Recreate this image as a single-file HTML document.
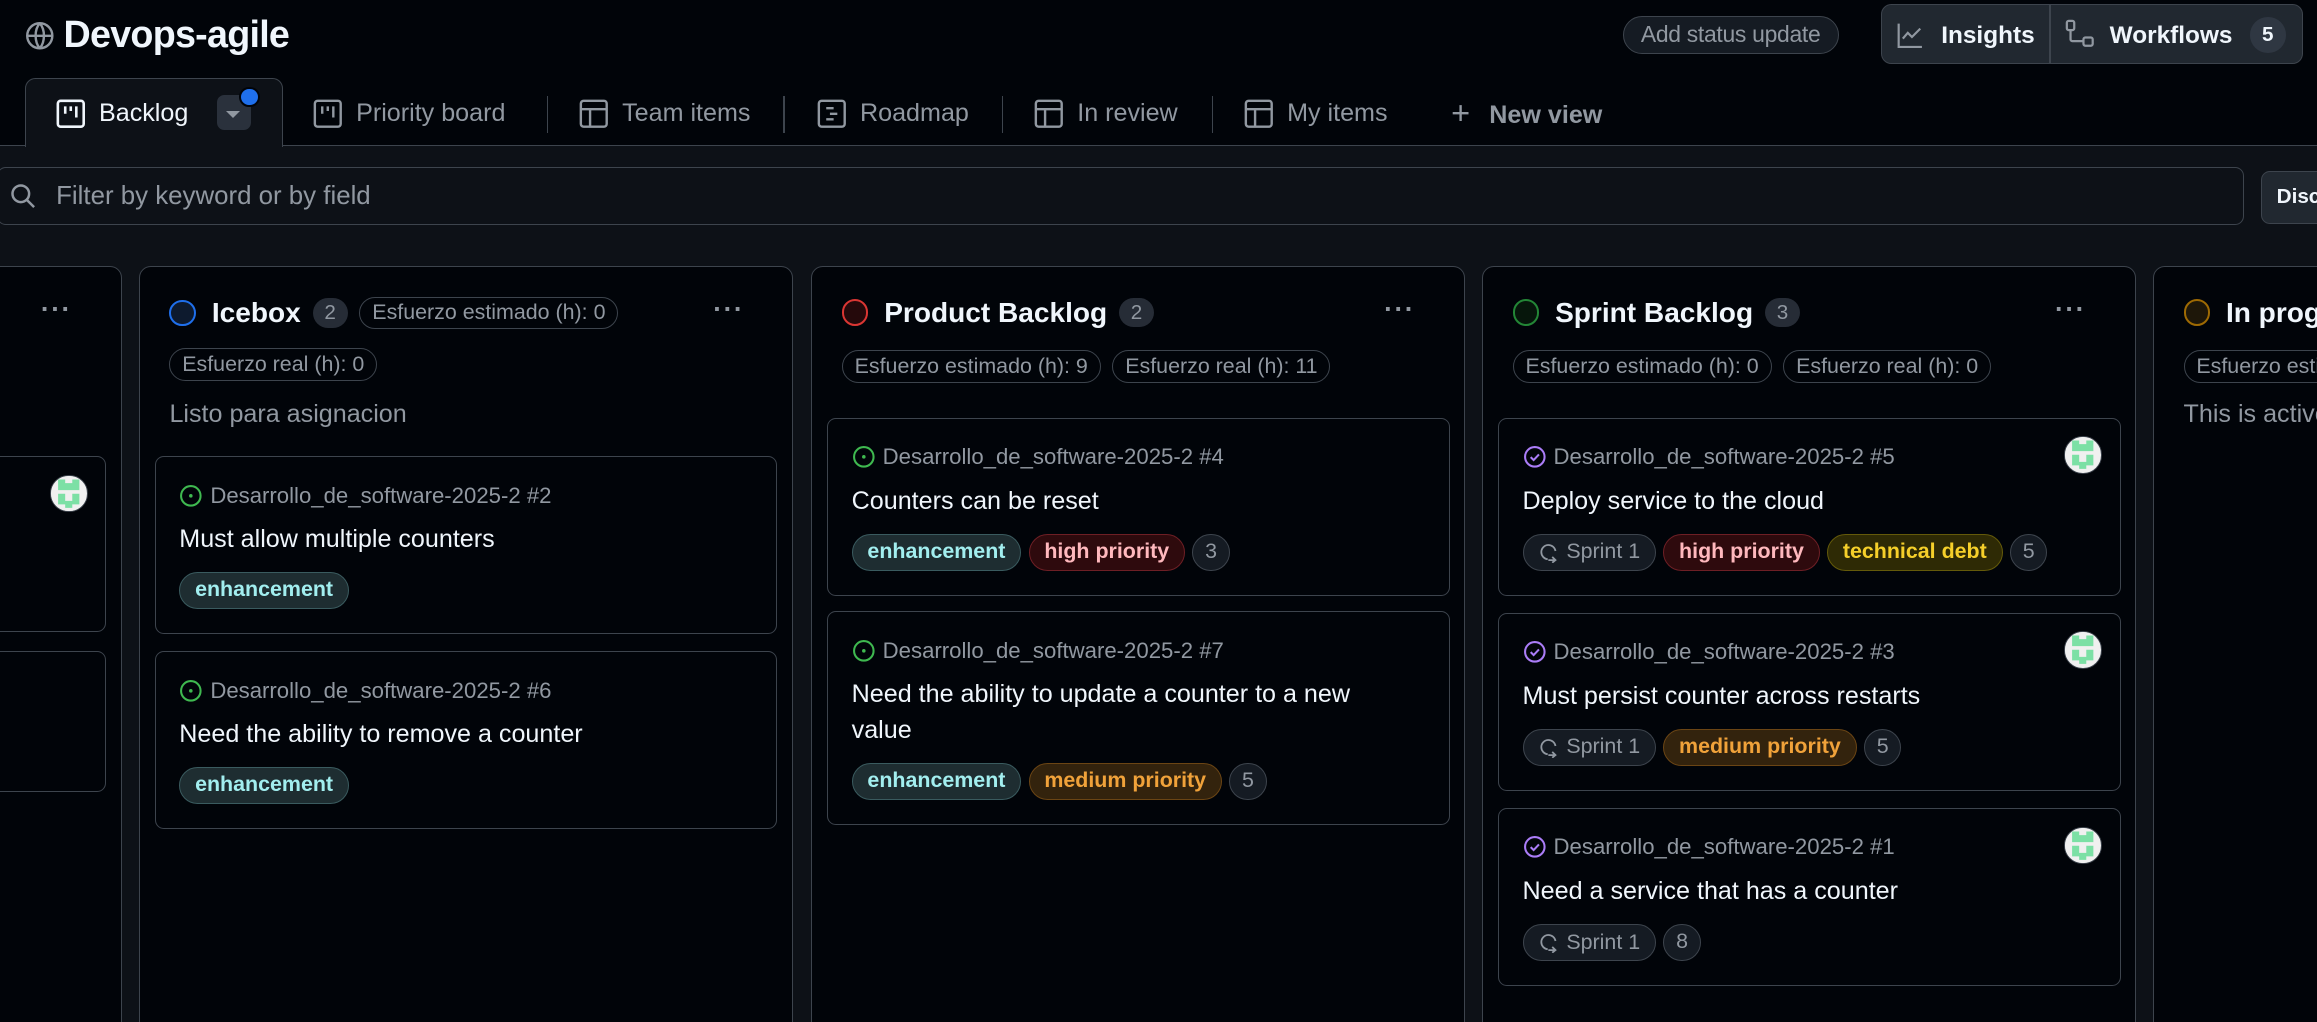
<!DOCTYPE html>
<html><head><meta charset="utf-8">
<style>
html,body{margin:0;padding:0;background:#010409;width:2317px;height:1022px;overflow:hidden}
#z{zoom:1.4777;position:relative;width:1568px;height:692px;overflow:hidden;font-family:"Liberation Sans",sans-serif;color:#f0f6fc;background:#010409}
.a{position:absolute}
.low{position:absolute;left:0;top:98px;width:1568px;height:600px;background:#0d1117;border-top:1px solid #3d444d}
.tab{position:absolute;top:67px;font-size:17px;color:#9198a1;display:flex;align-items:center;gap:9px;white-space:nowrap}
.sep{position:absolute;top:65px;width:1px;height:25px;background:#3d444d}
.col{position:absolute;top:180px;width:441px;height:540px;background:#010409;border:1px solid #3d444d;border-radius:8px}
.hd{position:absolute;top:20px;left:20px;display:flex;align-items:center;gap:8px;white-space:nowrap}
.ring{width:15px;height:15px;border-radius:50%;border:2px solid;margin-right:3px}
.ttl{font-size:19px;font-weight:bold}
.cnt{background:#262c36;color:#9198a1;font-size:14px;border-radius:11px;padding:2px 8px}
.pill{display:inline-block;font-size:14.5px;color:#9198a1;border:1px solid #3d444d;border-radius:12px;padding:2px 8px;white-space:nowrap}
.dots{position:absolute;top:18px;font-size:18px;color:#9198a1;letter-spacing:1px;font-weight:bold}
.desc{position:absolute;left:20px;font-size:17px;color:#9198a1;white-space:nowrap}
.card{position:absolute;left:10px;width:388px;padding:16px;background:#010409;border:1px solid #3d444d;border-radius:6px}
.repo{font-size:15px;color:#9198a1;display:flex;align-items:center;gap:5px;height:20px;white-space:nowrap}
.ct{font-size:17px;line-height:24px;margin-top:8px}
.lb{margin-top:10px;display:flex;gap:5px;height:25px}
.l{font-size:14.5px;font-weight:bold;border:1px solid;border-radius:13px;padding:0 10px;line-height:23px;white-space:nowrap}
.en{background:#1e2d31;border-color:#3a5b5f;color:#a2eeef}
.hp{background:#2e0a0d;border-color:#6e1f25;color:#ffb8bd}
.mp{background:#33230d;border-color:#6b4514;color:#f0a23a}
.td{background:#2e2a05;border-color:#645a0a;color:#f5cf2a}
.nm{background:#151b23;border-color:#3d444d;color:#9198a1;font-weight:normal;padding:0 8px}
.sp{background:#151b23;border-color:#3d444d;color:#9198a1;font-weight:normal;display:flex;align-items:center;gap:5px}
.av{position:absolute;right:12px;top:12px;width:24px;height:24px;border-radius:50%;background:#f0f0f0;border:1px solid #3d444d;overflow:hidden}
</style></head><body><div id="z">
<svg class="a" style="left:17px;top:14px" width="20" height="20" viewBox="0 0 16 16" fill="none" stroke="#9198a1" stroke-width="1.3"><circle cx="8" cy="8" r="6.8"/><path d="M1.2 8h13.6M8 1.2c-3 3.5-3 10 0 13.6M8 1.2c3 3.5 3 10 0 13.6"/></svg>
<div class="a" style="left:43px;top:9px;font-size:25.5px;font-weight:bold;letter-spacing:-0.5px">Devops-agile</div>
<div class="a" style="left:1098px;top:11px;width:145px;height:24px;border:1px solid #3d444d;border-radius:13px;background:#151b23;color:#9198a1;font-size:15.5px;line-height:24px;text-align:center;letter-spacing:-0.2px">Add status update</div>
<div class="a" style="left:1273px;top:3px;width:284px;height:39px;border:1px solid #3d444d;border-radius:7px;background:#212830;font-size:16.5px;font-weight:bold">
 <svg class="a" style="left:10px;top:11px" width="18" height="18" viewBox="0 0 16 16" fill="none" stroke="#9198a1" stroke-width="1.3"><path d="M1 1v14h14M3.5 10l3-3.5 2.5 2.5L14 4"/></svg>
 <div class="a" style="left:40px;top:11px">Insights</div>
 <div class="a" style="left:113px;top:0;width:1px;height:39px;background:#3d444d"></div>
 <svg class="a" style="left:124px;top:9px" width="20" height="20" viewBox="0 0 16 16" fill="none" stroke="#9198a1" stroke-width="1.2"><rect x="1" y="1" width="4" height="5" rx="1"/><rect x="10" y="10" width="5" height="4.5" rx="1"/><path d="M3 6v5a1 1 0 0 0 1 1h6"/></svg>
 <div class="a" style="left:154px;top:11px">Workflows</div>
 <div class="a" style="left:249px;top:8px;width:24px;height:24px;border-radius:12px;background:#2f3742;font-size:14px;text-align:center;line-height:24px">5</div>
</div>
<div class="low"></div>
<div class="a" style="left:17px;top:53px;width:173px;height:46px;background:#0d1117;border:1px solid #3d444d;border-bottom:none;border-radius:7px 7px 0 0"></div>
<div class="tab" style="left:38px;color:#f0f6fc">
 <svg width="20" height="20" viewBox="0 0 16 16" fill="none" stroke="#f0f6fc" stroke-width="1.4"><rect x="1" y="1" width="14" height="14" rx="1.5"/><path d="M5 4v4M8 4v2.5M11 4v6"/></svg><span>Backlog</span></div>
<div class="a" style="left:147px;top:64px;width:23px;height:24px;border-radius:5px;background:#2a313c"></div>
<div class="a" style="left:153px;top:75px;width:0;height:0;border-left:5px solid transparent;border-right:5px solid transparent;border-top:5px solid #9198a1"></div>
<div class="a" style="left:162px;top:59px;width:11px;height:11px;border-radius:50%;background:#1f6feb;border:2px solid #010409"></div>
<div class="tab" style="left:212px"><svg width="20" height="20" viewBox="0 0 16 16" fill="none" stroke="#9198a1" stroke-width="1.3"><rect x="1" y="1" width="14" height="14" rx="1.5"/><path d="M5 4v4M8 4v2.5M11 4v6"/></svg><span>Priority board</span></div>
<div class="sep" style="left:370px"></div>
<div class="tab" style="left:392px"><svg width="20" height="20" viewBox="0 0 16 16" fill="none" stroke="#9198a1" stroke-width="1.3"><rect x="1" y="1" width="14" height="14" rx="1.5"/><path d="M1 5.5h14M6 5.5V15"/></svg><span>Team items</span></div>
<div class="sep" style="left:530px"></div>
<div class="tab" style="left:553px"><svg width="20" height="20" viewBox="0 0 16 16" fill="none" stroke="#9198a1" stroke-width="1.3"><rect x="1" y="1" width="14" height="14" rx="1.5"/><path d="M5 5h4M7 8h4M5 11h4"/></svg><span>Roadmap</span></div>
<div class="sep" style="left:678px"></div>
<div class="tab" style="left:700px"><svg width="20" height="20" viewBox="0 0 16 16" fill="none" stroke="#9198a1" stroke-width="1.3"><rect x="1" y="1" width="14" height="14" rx="1.5"/><path d="M1 5.5h14M6 5.5V15"/></svg><span>In review</span></div>
<div class="sep" style="left:820px"></div>
<div class="tab" style="left:842px"><svg width="20" height="20" viewBox="0 0 16 16" fill="none" stroke="#9198a1" stroke-width="1.3"><rect x="1" y="1" width="14" height="14" rx="1.5"/><path d="M1 5.5h14M6 5.5V15"/></svg><span>My items</span></div>
<div class="tab" style="left:982px;font-weight:bold"><span style="font-size:22px;font-weight:normal;margin-top:-3px">+</span><span style="margin-left:4px">New view</span></div>
<div class="a" style="left:-2px;top:113px;width:1519px;height:38px;border:1px solid #3d444d;border-radius:6px;background:#0d1117"></div>
<svg class="a" style="left:7px;top:124px" width="18" height="18" viewBox="0 0 16 16" fill="none" stroke="#9198a1" stroke-width="1.5"><circle cx="6.5" cy="6.5" r="5"/><path d="M10.2 10.2 14.5 14.5"/></svg>
<div class="a" style="left:38px;top:123px;font-size:17.5px;color:#9198a1">Filter by keyword or by field</div>
<div class="a" style="left:1530px;top:116px;width:60px;height:34px;border:1px solid #3d444d;border-radius:6px;background:#212830;font-size:14px;font-weight:bold;line-height:34px;padding-left:10px">Discard</div>
<div class="col" style="left:-360px">
 <div class="dots" style="left:387px">···</div>
 <div class="card" style="top:128px;left:10px;height:86px"><div class="av" style="right:12px"><svg width="24" height="24" viewBox="0 0 10 10"><rect width="10" height="10" fill="#f0f0f0"/><path fill="#7ce0a5" d="M2 1h2v3H2zM6 1h2v3H6zM4 2h2v2H4zM2 5h2v3H2zM6 5h2v3H6zM4 7h2v2H4z"/></svg></div></div>
 <div class="card" style="top:260px;left:10px;height:62px"></div>
</div>
<div class="col" style="left:94px">
 <div class="hd" style="top:20px"><div class="ring" style="border-color:#1f6feb;background:#0d1a2e"></div><span class="ttl">Icebox</span><span class="cnt">2</span><span class="pill">Esfuerzo estimado (h): 0</span></div>
 <div class="dots" style="left:388px">···</div>
 <div class="a" style="left:20px;top:55px"><span class="pill">Esfuerzo real (h): 0</span></div>
 <div class="desc" style="top:90px">Listo para asignacion</div>
 <div class="card" style="top:128px">
  <div class="repo"><svg width="16" height="16" viewBox="0 0 16 16" fill="none" stroke="#3fb950" stroke-width="1.4"><circle cx="8" cy="8" r="6.6"/><circle cx="8" cy="8" r="1.2" fill="#3fb950" stroke="none"/></svg>Desarrollo_de_software-2025-2 #2</div>
  <div class="ct">Must allow multiple counters</div>
  <div class="lb"><span class="l en">enhancement</span></div></div>
 <div class="card" style="top:260px">
  <div class="repo"><svg width="16" height="16" viewBox="0 0 16 16" fill="none" stroke="#3fb950" stroke-width="1.4"><circle cx="8" cy="8" r="6.6"/><circle cx="8" cy="8" r="1.2" fill="#3fb950" stroke="none"/></svg>Desarrollo_de_software-2025-2 #6</div>
  <div class="ct">Need the ability to remove a counter</div>
  <div class="lb"><span class="l en">enhancement</span></div></div>
</div>
<div class="col" style="left:549px">
 <div class="hd" style="top:20px"><div class="ring" style="border-color:#da3633;background:#25090b"></div><span class="ttl">Product Backlog</span><span class="cnt">2</span></div>
 <div class="dots" style="left:387px">···</div>
 <div class="a" style="left:20px;top:56px;display:flex;gap:8px"><span class="pill">Esfuerzo estimado (h): 9</span><span class="pill">Esfuerzo real (h): 11</span></div>
 <div class="card" style="top:102px">
  <div class="repo"><svg width="16" height="16" viewBox="0 0 16 16" fill="none" stroke="#3fb950" stroke-width="1.4"><circle cx="8" cy="8" r="6.6"/><circle cx="8" cy="8" r="1.2" fill="#3fb950" stroke="none"/></svg>Desarrollo_de_software-2025-2 #4</div>
  <div class="ct">Counters can be reset</div>
  <div class="lb"><span class="l en">enhancement</span><span class="l hp">high priority</span><span class="l nm">3</span></div></div>
 <div class="card" style="top:233px">
  <div class="repo"><svg width="16" height="16" viewBox="0 0 16 16" fill="none" stroke="#3fb950" stroke-width="1.4"><circle cx="8" cy="8" r="6.6"/><circle cx="8" cy="8" r="1.2" fill="#3fb950" stroke="none"/></svg>Desarrollo_de_software-2025-2 #7</div>
  <div class="ct">Need the ability to update a counter to a new<br>value</div>
  <div class="lb"><span class="l en">enhancement</span><span class="l mp">medium priority</span><span class="l nm">5</span></div></div>
</div>
<div class="col" style="left:1003px">
 <div class="hd" style="top:20px"><div class="ring" style="border-color:#238636;background:#06160b"></div><span class="ttl">Sprint Backlog</span><span class="cnt">3</span></div>
 <div class="dots" style="left:387px">···</div>
 <div class="a" style="left:20px;top:56px;display:flex;gap:8px"><span class="pill">Esfuerzo estimado (h): 0</span><span class="pill">Esfuerzo real (h): 0</span></div>
 <div class="card" style="top:102px">
  <div class="av"><svg width="24" height="24" viewBox="0 0 10 10"><rect width="10" height="10" fill="#f0f0f0"/><path fill="#7ce0a5" d="M2 1h2v3H2zM6 1h2v3H6zM4 2h2v2H4zM2 5h2v3H2zM6 5h2v3H6zM4 7h2v2H4z"/></svg></div>
  <div class="repo"><svg width="16" height="16" viewBox="0 0 16 16" fill="none" stroke="#ab7df8" stroke-width="1.4"><circle cx="8" cy="8" r="6.6"/><path d="M5.2 8.2l2 2 3.6-3.8"/></svg>Desarrollo_de_software-2025-2 #5</div>
  <div class="ct">Deploy service to the cloud</div>
  <div class="lb"><span class="l sp"><svg width="14" height="14" viewBox="0 0 16 16" fill="none" stroke="#9198a1" stroke-width="1.4"><path d="M13.5 7a5.5 5.5 0 1 0-6 6.3M8 14h5.5M11 11.5l2.5 2.5-2.5 2"/></svg>Sprint 1</span><span class="l hp">high priority</span><span class="l td">technical debt</span><span class="l nm">5</span></div></div>
 <div class="card" style="top:234px">
  <div class="av"><svg width="24" height="24" viewBox="0 0 10 10"><rect width="10" height="10" fill="#f0f0f0"/><path fill="#7ce0a5" d="M2 1h2v3H2zM6 1h2v3H6zM4 2h2v2H4zM2 5h2v3H2zM6 5h2v3H6zM4 7h2v2H4z"/></svg></div>
  <div class="repo"><svg width="16" height="16" viewBox="0 0 16 16" fill="none" stroke="#ab7df8" stroke-width="1.4"><circle cx="8" cy="8" r="6.6"/><path d="M5.2 8.2l2 2 3.6-3.8"/></svg>Desarrollo_de_software-2025-2 #3</div>
  <div class="ct">Must persist counter across restarts</div>
  <div class="lb"><span class="l sp"><svg width="14" height="14" viewBox="0 0 16 16" fill="none" stroke="#9198a1" stroke-width="1.4"><path d="M13.5 7a5.5 5.5 0 1 0-6 6.3M8 14h5.5M11 11.5l2.5 2.5-2.5 2"/></svg>Sprint 1</span><span class="l mp">medium priority</span><span class="l nm">5</span></div></div>
 <div class="card" style="top:366px">
  <div class="av"><svg width="24" height="24" viewBox="0 0 10 10"><rect width="10" height="10" fill="#f0f0f0"/><path fill="#7ce0a5" d="M2 1h2v3H2zM6 1h2v3H6zM4 2h2v2H4zM2 5h2v3H2zM6 5h2v3H6zM4 7h2v2H4z"/></svg></div>
  <div class="repo"><svg width="16" height="16" viewBox="0 0 16 16" fill="none" stroke="#ab7df8" stroke-width="1.4"><circle cx="8" cy="8" r="6.6"/><path d="M5.2 8.2l2 2 3.6-3.8"/></svg>Desarrollo_de_software-2025-2 #1</div>
  <div class="ct">Need a service that has a counter</div>
  <div class="lb"><span class="l sp"><svg width="14" height="14" viewBox="0 0 16 16" fill="none" stroke="#9198a1" stroke-width="1.4"><path d="M13.5 7a5.5 5.5 0 1 0-6 6.3M8 14h5.5M11 11.5l2.5 2.5-2.5 2"/></svg>Sprint 1</span><span class="l nm">8</span></div></div>
</div>
<div class="col" style="left:1457px">
 <div class="hd" style="top:20px"><div class="ring" style="border-color:#9e6a03;background:#1e1709"></div><span class="ttl">In progress</span></div>
 <div class="a" style="left:20px;top:56px"><span class="pill">Esfuerzo estimado (h): 0</span></div>
 <div class="desc" style="top:90px">This is actively being worked on</div>
</div>
</div></body></html>
